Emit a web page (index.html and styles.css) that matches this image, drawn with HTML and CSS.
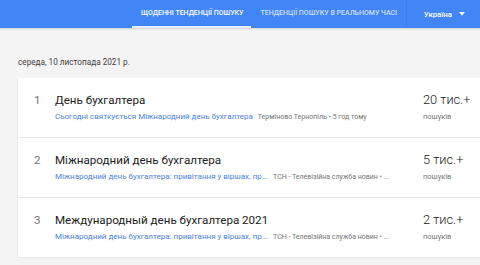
FILE: index.html
```html
<!DOCTYPE html>
<html lang="uk">
<head>
    <meta charset="UTF-8">
    <title>Тенденції пошуку</title>
    <link rel="stylesheet" href="styles.css">
</head>
<body>

    <div class="header">
        <div class="tab active">Щоденні тенденції пошуку</div>
        <div class="tab">Тенденції пошуку в реальному часі</div>
        <div class="geo">
            <span>Україна</span>
            <svg width="6" height="4" viewBox="0 0 6 4"><path d="M0 0h6L3 3.5z" fill="#fff"/></svg>
        </div>
    </div>

    <div class="content">
        <div class="date">середа, 10 листопада 2021 р.</div>

        <div class="card">
            <div class="row">
                <div class="num">1</div>
                <div class="details">
                    <div class="title">День бухгалтера</div>
                    <div class="sub">
                        <span class="link">Сьогодні святкується Міжнародний день бухгалтера</span>
                        <span class="source">Терміново Тернопіль • 5 год тому</span>
                    </div>
                </div>
                <div class="count">
                    <div class="amount">20 тис.+</div>
                    <div class="label">пошуків</div>
                </div>
            </div>

            <div class="row">
                <div class="num">2</div>
                <div class="details">
                    <div class="title">Міжнародний день бухгалтера</div>
                    <div class="sub">
                        <span class="link">Міжнародний день бухгалтера: привітання у віршах, пр...</span>
                        <span class="source">ТСН - Телевізійна служба новин • ...</span>
                    </div>
                </div>
                <div class="count">
                    <div class="amount">5 тис.+</div>
                    <div class="label">пошуків</div>
                </div>
            </div>

            <div class="row">
                <div class="num">3</div>
                <div class="details">
                    <div class="title">Международный день бухгалтера 2021</div>
                    <div class="sub">
                        <span class="link">Міжнародний день бухгалтера: привітання у віршах, пр...</span>
                        <span class="source">ТСН - Телевізійна служба новин • ...</span>
                    </div>
                </div>
                <div class="count">
                    <div class="amount">2 тис.+</div>
                    <div class="label">пошуків</div>
                </div>
            </div>
        </div>
    </div>

</body>
</html>
```

FILE: styles.css
```css
body {
    margin: 0;
    font-family: Roboto, "Noto Sans", sans-serif;
    background-color: #f4f4f4;
    overflow: hidden;
}
.header {
    height: 28px;
    background-color: #4285f4;
    display: flex;
    align-items: stretch;
    padding-left: 132px;
    box-shadow: 0 1px 2px rgba(0, 0, 0, 0.15);
}
.tab {
    display: flex;
    align-items: center;
    padding: 0 8px 0 10px;
    font-size: 7px;
    font-weight: 500;
    text-transform: uppercase;
    white-space: nowrap;
    color: rgba(255, 255, 255, 0.75);
    border-bottom: 2px solid transparent;
    box-sizing: border-box;
}
.tab.active {
    color: #fff;
    border-bottom-color: rgba(255, 255, 255, 0.85);
    padding: 0 7px 0 9px;
}
.geo {
    display: flex;
    align-items: center;
    gap: 7px;
    margin-left: auto;
    padding: 0 15px 0 17px;
    font-size: 7.8px;
    font-weight: 500;
    color: #fff;
    border-left: 1px solid rgba(0, 0, 0, 0.05);
}
.content {
    padding: 28px 0 0 18px;
}
.date {
    font-size: 8.2px;
    line-height: 12px;
    color: #424242;
    margin-bottom: 10px;
}
.card {
    background-color: #fff;
    box-shadow: 0 1px 2px rgba(0, 0, 0, 0.1);
}
.row {
    display: grid;
    grid-template-columns: 21px 1fr 57px;
    height: 59px;
    padding-left: 16px;
    border-bottom: 1px solid #e8e8e8;
    box-sizing: content-box;
}
.num {
    padding-top: 14px;
    font-size: 11.6px;
    line-height: 16px;
    color: #757575;
}
.details {
    padding-top: 14px;
    min-width: 0;
}
.title {
    font-size: 11.6px;
    line-height: 16px;
    color: #212121;
}
.sub {
    margin-top: 3px;
    font-size: 8px;
    line-height: 12px;
    white-space: nowrap;
}
.link {
    color: #4c82d8;
    margin-right: 3px;
}
.source {
    color: #757575;
    font-size: 7px;
}
.count {
    padding-top: 14px;
}
.amount {
    font-size: 12.8px;
    line-height: 16px;
    font-weight: 300;
    color: #212121;
}
.label {
    margin-top: 4px;
    font-size: 7.5px;
    line-height: 10px;
    color: #757575;
}
```
